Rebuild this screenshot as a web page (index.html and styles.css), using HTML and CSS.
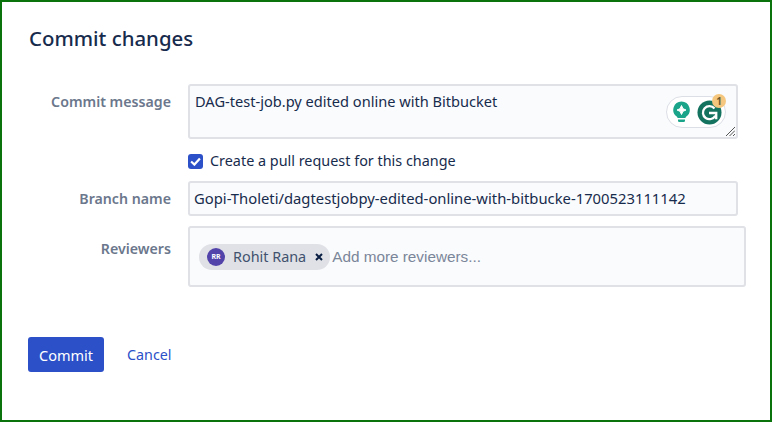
FILE: index.html
```html
<!DOCTYPE html>
<html lang="en">
<head>
<meta charset="utf-8">
<title>Commit changes</title>
<link rel="stylesheet" href="styles.css">
</head>
<body>
<main class="dialog">
  <h1 class="title">Commit changes</h1>
  <form class="form">
    <div class="row row-message">
      <label class="label">Commit message</label>
      <div class="field field-message">
        <span class="value value-message">DAG-test-job.py edited online with Bitbucket</span>
        <div class="grammarly">
          <svg class="bulb" width="19" height="22" viewBox="0 0 18 22" aria-hidden="true">
            <path d="M9 0.500a8.300 8.300 0 0 0-4.800 15c.5.400.8.900.9 1.500h7.800c.1-.6.400-1.100.9-1.500A8.300 8.300 0 0 0 9 0.500z" fill="#1aa58a"/>
            <path d="M5.500 18.500h7v1.200a1.300 1.300 0 0 1-1.300 1.300H6.800a1.300 1.300 0 0 1-1.300-1.300z" fill="#1aa58a"/>
            <path d="M9 4.500l1.500 3.200L13.500 9l-3 1.300L9 13.500l-1.500-3.200L4.500 9l3-1.300z" fill="#fff" stroke="#fff" stroke-width="1" stroke-linejoin="round"/>
          </svg>
          <svg class="glogo" width="25" height="25" viewBox="0 0 26 26" aria-hidden="true">
            <circle cx="13" cy="13" r="12.500" fill="#14735f"/>
            <path d="M18.200 8.800A6.800 6.800 0 1 0 19 16.300M12.500 13.500H20V20" fill="none" stroke="#fff" stroke-width="2.400"/>
          </svg>
          <span class="badge">1</span>
        </div>
        <svg class="grip" width="9" height="9" viewBox="0 0 9 9" aria-hidden="true">
          <path d="M0 9L9 0M3.500 9L9 3.500M7 9L9 7" stroke="#555" stroke-width="1" fill="none"/>
        </svg>
      </div>
    </div>
    <div class="row row-check">
      <span class="label"></span>
      <label class="check">
        <span class="box">
          <svg width="11" height="9" viewBox="0 0 10 8" aria-hidden="true"><path d="M1 4l3 2.800L9 1.200" fill="none" stroke="#fff" stroke-width="2"/></svg>
        </span>
        <span>Create a pull request for this change</span>
      </label>
    </div>
    <div class="row row-branch">
      <label class="label">Branch name</label>
      <div class="field field-branch"><span class="value value-branch">Gopi-Tholeti/dagtestjobpy-edited-online-with-bitbucke-1700523111142</span></div>
    </div>
    <div class="row row-reviewers">
      <label class="label label-reviewers">Reviewers</label>
      <div class="field field-reviewers">
        <span class="chip">
          <span class="avatar">RR</span>
          <span class="chip-name">Rohit Rana</span>
          <svg class="chip-x" width="8" height="8" viewBox="0 0 8 8" aria-hidden="true"><path d="M1 1l6 6M7 1L1 7" stroke="#091e42" stroke-width="2"/></svg>
        </span>
        <span class="placeholder">Add more reviewers...</span>
      </div>
    </div>
    <div class="actions">
      <button type="button" class="commit">Commit</button>
      <a class="cancel">Cancel</a>
    </div>
  </form>
</main>
</body>
</html>
```
FILE: styles.css
```css
* { box-sizing: border-box; }
html, body { margin: 0; padding: 0; background: #fff; }
body { width: 772px; height: 422px; overflow: hidden; }
.dialog {
  width: 772px;
  height: 422px;
  border: 2px solid #0b730b;
  padding: 0 26px;
  font-family: "Noto Sans", "Open Sans", sans-serif;
  font-size: 14px;
  color: #172b4d;
}
.title {
  margin: 21px 0 0;
  padding-left: 1px;
  font-size: 20.4px;
  line-height: 30px;
  font-weight: 500;
  color: #172b4d;
}
.form { margin-top: 31px; display: flex; flex-direction: column; }
.row { display: grid; grid-template-columns: 143px 1fr; column-gap: 17px; align-items: start; }
.label {
  text-align: right;
  font-weight: 600;
  font-size: 14.2px;
  line-height: 20px;
  color: #6b778c;
}
.row-message .label { padding-top: 8px; }
.field {
  border: 2px solid #dfe1e6;
  border-radius: 3px;
  background: #fafbfc;
}
.value { line-height: 20px; }
.value-message { font-size: 14.6px; }
.value-branch { font-size: 14.8px; margin-left: -1px; }
.field-message {
  position: relative;
  width: 550px;
  height: 55px;
  padding: 5px 5px;
}
.grammarly {
  position: absolute;
  right: 10px;
  top: 10px;
  width: 60px;
  height: 32px;
  display: flex;
  align-items: center;
  gap: 6px;
  padding-left: 5px;
  border: 1px solid #dcdfe6;
  border-radius: 16px;
  background: #fff;
}
.badge {
  position: absolute;
  right: -1px;
  top: -3px;
  width: 14px;
  height: 14px;
  border-radius: 50%;
  background: #f5c77e;
  color: #6b5a30;
  font-size: 10px;
  font-weight: 700;
  line-height: 14px;
  text-align: center;
}
.grip { position: absolute; right: 1px; bottom: 1px; }
.row-check { margin-top: 12px; }
.check { display: flex; align-items: center; gap: 7px; line-height: 20px; font-size: 14.4px; color: #172b4d; }
.box {
  width: 15px;
  height: 15px;
  border-radius: 3px;
  background: #2b50c8;
  display: flex;
  align-items: center;
  justify-content: center;
}
.row-branch { margin-top: 10px; }
.row-branch .label { padding-top: 8px; }
.field-branch { width: 550px; height: 35px; padding: 5px 5px; }
.row-reviewers { margin-top: 10px; }
.label-reviewers { padding-top: 13px; }
.field-reviewers {
  width: 558px;
  height: 61px;
  display: flex;
  align-items: center;
  padding: 0 9px;
}
.chip {
  display: flex;
  align-items: center;
  height: 26px;
  padding-left: 8px;
  padding-right: 7px;
  border-radius: 13px;
  background: #dfe1e6;
  color: #42526e;
}
.avatar {
  width: 18px;
  height: 18px;
  border-radius: 50%;
  background: #5243aa;
  color: #fff;
  font-size: 7px;
  font-weight: 700;
  line-height: 18px;
  text-align: center;
}
.chip-name { margin-left: 8px; font-size: 14.4px; }
.chip-x { margin-left: 9px; }
.placeholder {
  margin-left: 2px;
  font-family: "Liberation Sans", Arial, sans-serif;
  font-size: 15.3px;
  color: #7a869a;
}
.actions { display: flex; align-items: center; margin-top: 50px; }
.commit {
  width: 76px;
  height: 35px;
  border: 0;
  border-radius: 3px;
  background: #2b50c8;
  color: #fff;
  font-family: inherit;
  font-size: 14.5px;
}
.cancel { margin-left: 23px; font-size: 14.3px; color: #2b50c8; }
```
